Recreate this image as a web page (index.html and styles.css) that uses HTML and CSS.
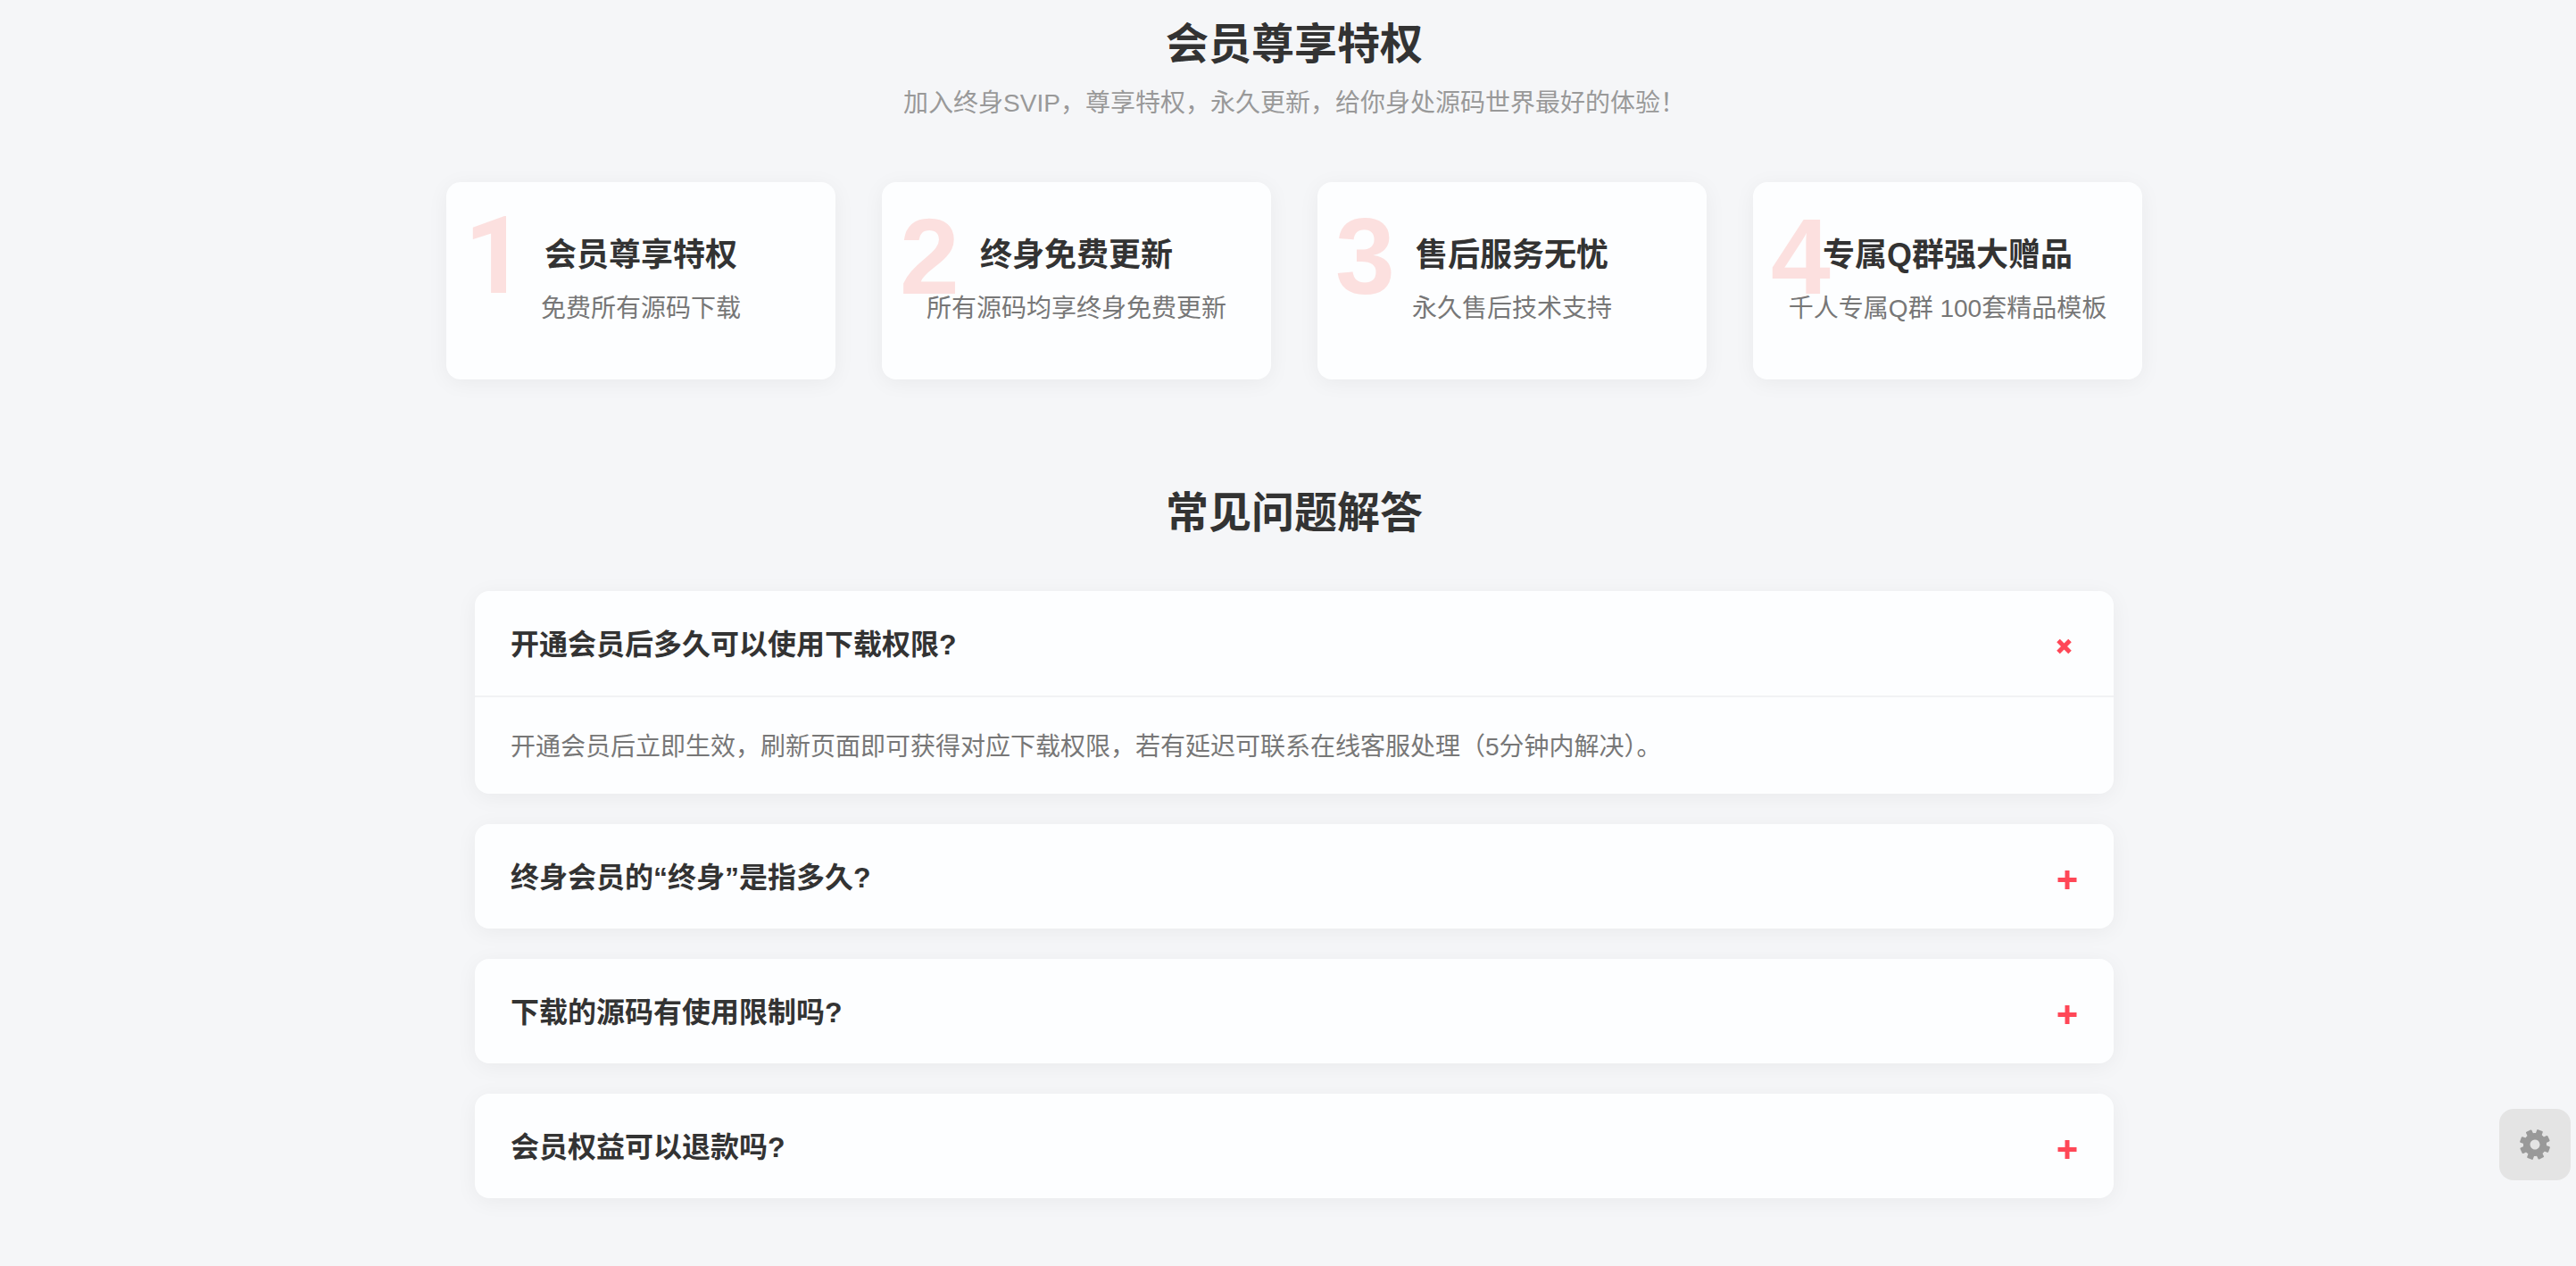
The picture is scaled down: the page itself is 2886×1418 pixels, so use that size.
FILE: index.html
```html
<!DOCTYPE html>
<html lang="zh-CN">
<head>
<meta charset="utf-8">
<meta name="viewport" content="width=device-width, initial-scale=1">
<title>会员尊享特权</title>
<link rel="stylesheet" href="styles.css">
</head>
<body>
<main class="page">
  <section class="benefits">
    <h2 class="section-title">会员尊享特权</h2>
    <p class="section-subtitle">加入终身SVIP，尊享特权，永久更新，给你身处源码世界最好的体验！</p>
    <ul class="cards">
      <li class="card">
        <span class="card-number card-number-plain">1</span>
        <h3 class="card-title">会员尊享特权</h3>
        <p class="card-text">免费所有源码下载</p>
      </li>
      <li class="card">
        <span class="card-number">2</span>
        <h3 class="card-title">终身免费更新</h3>
        <p class="card-text">所有源码均享终身免费更新</p>
      </li>
      <li class="card">
        <span class="card-number">3</span>
        <h3 class="card-title">售后服务无忧</h3>
        <p class="card-text">永久售后技术支持</p>
      </li>
      <li class="card">
        <span class="card-number">4</span>
        <h3 class="card-title">专属Q群强大赠品</h3>
        <p class="card-text">千人专属Q群 100套精品模板</p>
      </li>
    </ul>
  </section>

  <section class="faq">
    <h2 class="section-title">常见问题解答</h2>
    <div class="faq-list">
      <details class="faq-item" open>
        <summary class="faq-question">开通会员后多久可以使用下载权限?
          <svg class="faq-icon" viewBox="0 0 28 28" aria-hidden="true"><path d="M6 9.500l13 13M19 9.500l-13 13"/></svg>
        </summary>
        <p class="faq-answer">开通会员后立即生效，刷新页面即可获得对应下载权限，若有延迟可联系在线客服处理（5分钟内解决）。</p>
      </details>
      <details class="faq-item">
        <summary class="faq-question">终身会员的“终身”是指多久?
          <svg class="faq-icon" viewBox="0 0 28 28" aria-hidden="true"><path d="M16 6v21M5.500 16.500h21"/></svg>
        </summary>
      </details>
      <details class="faq-item">
        <summary class="faq-question">下载的源码有使用限制吗?
          <svg class="faq-icon" viewBox="0 0 28 28" aria-hidden="true"><path d="M16 6v21M5.500 16.500h21"/></svg>
        </summary>
      </details>
      <details class="faq-item">
        <summary class="faq-question">会员权益可以退款吗?
          <svg class="faq-icon" viewBox="0 0 28 28" aria-hidden="true"><path d="M16 6v21M5.500 16.500h21"/></svg>
        </summary>
      </details>
    </div>
  </section>
</main>

<button class="settings" type="button" aria-label="设置">
  <svg class="settings-icon" viewBox="-18 -18 36 36" aria-hidden="true">
    <defs><mask id="hub"><rect x="-18" y="-18" width="36" height="36" fill="#fff"/><circle r="5.500" fill="#000"/></mask></defs>
    <g mask="url(#hub)" fill="currentColor" transform="rotate(20)">
      <circle r="13"/>
      <g id="teeth"><rect x="-3.500" y="-17" width="7" height="34" rx="1"/><rect x="-17" y="-3.500" width="34" height="7" rx="1"/></g>
      <use href="#teeth" transform="rotate(45)"/>
    </g>
  </svg>
</button>
</body>
</html>
```

FILE: styles.css
```css
* {
  box-sizing: border-box;
  margin: 0;
  padding: 0;
}

body {
  background: #f5f6f8;
  color: #333;
  font-family: "Liberation Sans", "Noto Sans CJK SC", sans-serif;
  font-size: 28px;
  line-height: 40px;
}

.page {
  padding: 18px 0 76px 14px;
}

.section-title {
  font-size: 48px;
  line-height: 64px;
  text-align: center;
}

.section-subtitle {
  margin-top: 14px;
  color: #999;
  text-align: center;
}

.cards {
  display: grid;
  grid-template-columns: repeat(4, 1fr);
  gap: 52px;
  max-width: 1900px;
  margin: 68px auto 0;
  list-style: none;
}

.card {
  position: relative;
  padding: 58px 20px 59px;
  background: #fdfeff;
  border-radius: 16px;
  box-shadow: 0 4px 24px rgba(0, 0, 0, 0.05);
  text-align: center;
}

.card-number {
  position: absolute;
  top: 23px;
  left: 20px;
  color: #fce0df;
  font-size: 120px;
  font-weight: 700;
  line-height: 120px;
}

.card-number-plain {
  font-family: Roboto, "Liberation Sans", sans-serif;
}

.card-title {
  position: relative;
  font-size: 36px;
  line-height: 48px;
}

.card-text {
  position: relative;
  margin-top: 16px;
  color: #777;
}

.faq {
  margin-top: 118px;
}

.faq-list {
  display: grid;
  gap: 34px;
  max-width: 1836px;
  margin: 55px auto 0;
}

.faq-item {
  background: #fdfeff;
  border-radius: 16px;
  box-shadow: 0 4px 24px rgba(0, 0, 0, 0.05);
}

.faq-question {
  display: flex;
  align-items: center;
  justify-content: space-between;
  padding: 36px 40px 33px;
  font-size: 32px;
  font-weight: 700;
  line-height: 48px;
  list-style: none;
  cursor: pointer;
}

.faq-icon {
  width: 28px;
  height: 28px;
  fill: none;
  stroke: #ff4757;
  stroke-width: 5;
}

.faq-answer {
  padding: 36px 40px 32px;
  border-top: 2px solid #f1f2f4;
  color: #777;
}

.settings {
  position: fixed;
  right: 6px;
  bottom: 96px;
  display: grid;
  place-items: center;
  width: 80px;
  height: 80px;
  border: 0;
  border-radius: 16px;
  background: #e4e4e4;
  color: #999;
  cursor: pointer;
}

.settings-icon {
  width: 36px;
  height: 36px;
}
```
